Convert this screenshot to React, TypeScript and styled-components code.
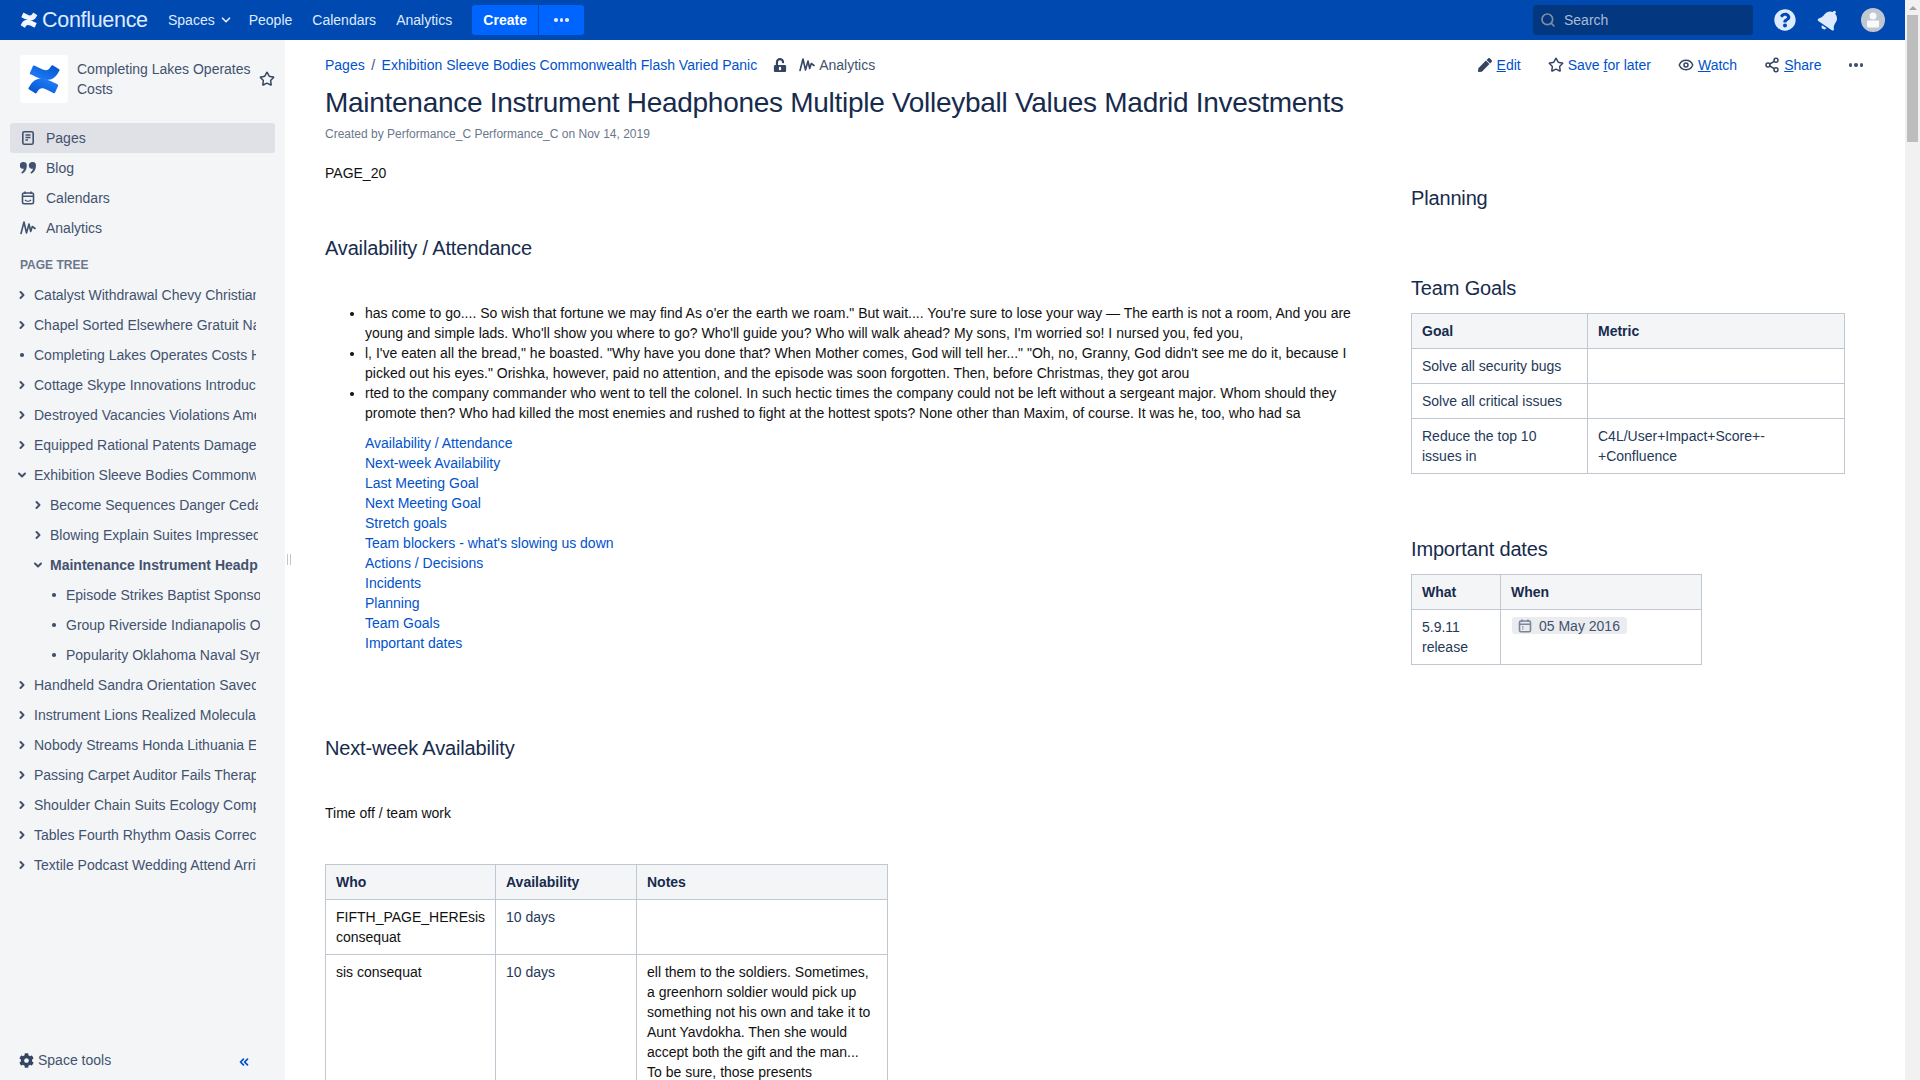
import React from 'react'
import styled, { createGlobalStyle } from 'styled-components'
import { ChevronDown, ChevronRight, ChevronsLeft, Eye, Search, Share2, Star } from 'lucide-react'
import { FaBell, FaCog, FaPen, FaQuestionCircle, FaUnlockAlt } from 'react-icons/fa'

const GlobalStyle = createGlobalStyle`
  html, body {
    margin: 0;
    height: 100%;
    overflow: hidden;
    background: #fff;
    font-family: 'Liberation Sans', Arial, sans-serif;
    font-size: 14px;
    line-height: 20px;
    color: #172b4d;
  }
`

const PAGE = styled.div`
  display: flex;
  height: 1080px;
  overflow: hidden;
`

const VIEW = styled.div`
  flex: 1;
  min-width: 0;
  display: flex;
  flex-direction: column;
`

const SCROLL_TRACK = styled.div`
  width: 15px;
  flex: none;
  background: #f1f1f1;
  display: flex;
  flex-direction: column;
  align-items: center;
  .arrow {
    height: 15px;
    flex: none;
    display: flex;
    align-items: center;
    justify-content: center;
  }
  .arrow::before {
    content: '';
    border-left: 4px solid transparent;
    border-right: 4px solid transparent;
    border-bottom: 4px solid #a3a3a3;
  }
  .thumb {
    width: 11px;
    height: 127px;
    background: #bdbdbd;
  }
`

const HEADER = styled.header`
  height: 40px;
  flex: none;
  background: #0049b0;
  display: flex;
  align-items: center;
  padding: 0 20px;
  color: #deebff;
`

const LOGO = styled.div`
  display: flex;
  align-items: center;
  width: 128px;
  margin-right: 20px;
  color: #deebff;
  font-size: 21.5px;
  letter-spacing: -0.3px;
  svg {
    margin-right: 4px;
    flex: none;
  }
`

const TOP_LINK = styled.a<{ $gap: number }>`
  display: flex;
  align-items: center;
  color: #deebff;
  margin-right: ${({ $gap }) => $gap}px;
`

const CREATE = styled.button`
  height: 30px;
  width: 66px;
  border: 0;
  border-radius: 3px 0 0 3px;
  background: #0065ff;
  color: #fff;
  font: bold 14px 'Liberation Sans', Arial, sans-serif;
  margin: 0 1px 0 0;
`

const MORE = styled.button`
  height: 30px;
  width: 45px;
  border: 0;
  padding: 0;
  border-radius: 0 3px 3px 0;
  background: #0065ff;
  display: flex;
  align-items: center;
  justify-content: center;
`

const DOTS = styled.span<{ $color: string }>`
  display: inline-flex;
  gap: 2px;
  i {
    width: 3.5px;
    height: 3.5px;
    border-radius: 50%;
    background: ${({ $color }) => $color};
  }
`

const SEARCH = styled.div`
  margin-left: auto;
  width: 220px;
  height: 30px;
  box-sizing: border-box;
  border-radius: 3px;
  background: #03377f;
  display: flex;
  align-items: center;
  padding-left: 7px;
  color: #a8bcd8;
  margin-right: 20px;
  svg {
    margin-right: 8px;
    color: #7f8ea5;
  }
`

const HEAD_ICON = styled.div`
  width: 24px;
  height: 24px;
  display: flex;
  align-items: center;
  justify-content: center;
  margin-right: 20px;
  color: #deebff;
  &:last-child {
    margin-right: 0;
  }
`

const AVATAR = styled.div`
  width: 24px;
  height: 24px;
  border-radius: 50%;
  overflow: hidden;
  background: #c1c7d0;
  svg {
    display: block;
  }
`

const BODY = styled.div`
  flex: 1;
  min-height: 0;
  display: flex;
`

const SIDEBAR = styled.aside`
  width: 285px;
  flex: none;
  background: #f4f5f7;
  display: flex;
  flex-direction: column;
  position: relative;
`

const SPACE_HEAD = styled.div`
  display: flex;
  align-items: center;
  padding: 15px 0 0 20px;
  color: #42526e;
  .badge {
    width: 48px;
    height: 48px;
    background: #fff;
    border-radius: 3px;
    flex: none;
    display: flex;
    align-items: center;
    justify-content: center;
    margin-right: 9px;
  }
  .title {
    width: 176px;
    flex: none;
  }
  svg.star {
    margin-left: 6px;
    color: #344563;
  }
`

const NAV = styled.nav`
  margin-top: 20px;
  padding: 0 10px;
`

const NAV_ITEM = styled.a<{ $active?: boolean }>`
  display: flex;
  align-items: center;
  height: 30px;
  border-radius: 3px;
  padding-left: 10px;
  color: #42526e;
  background: ${({ $active }) => ($active ? '#dfe1e6' : 'transparent')};
  svg {
    width: 16px;
    margin-right: 10px;
    flex: none;
  }
`

const TREE_LABEL = styled.div`
  margin: 12px 0 0 20px;
  height: 20px;
  font-size: 12px;
  font-weight: bold;
  color: #6b778c;
`

const TREE = styled.ul`
  list-style: none;
  margin: 5px 0 0;
  padding: 0;
`

const TREE_ROW = styled.li<{ $level: number; $bold?: boolean }>`
  display: flex;
  align-items: center;
  height: 30px;
  padding-left: ${({ $level }) => 16 + ($level - 1) * 16}px;
  color: #42526e;
  .toggle {
    width: 18px;
    flex: none;
    display: flex;
    align-items: center;
  }
  .bullet {
    width: 3.5px;
    height: 3.5px;
    margin-left: 4px;
    border-radius: 50%;
    background: #42526e;
  }
  .label {
    width: ${({ $level }) => 222 + ($level - 1) * -14}px;
    overflow: hidden;
    white-space: nowrap;
    font-weight: ${({ $bold }) => ($bold ? 'bold' : 'normal')};
  }
`

const SIDE_FOOT = styled.div`
  margin-top: auto;
  height: 30px;
  display: flex;
  align-items: flex-start;
  justify-content: space-between;
  padding: 0 34px 0 19px;
  color: #42526e;
  .tools {
    display: flex;
    align-items: center;
    gap: 4px;
    color: #42526e;
    height: 20px;
  }
  svg.collapse {
    margin-top: 5px;
    color: #0052cc;
  }
`

const GRIP = styled.div`
  position: absolute;
  right: -6px;
  top: 514px;
  width: 4px;
  height: 11px;
  border-left: 1.5px solid #c1c7d0;
  border-right: 1.5px solid #c1c7d0;
  box-sizing: border-box;
`

const MAIN = styled.main`
  flex: 1;
  min-width: 0;
  padding: 15px 0 0 40px;
  overflow: hidden;
`

const TOP_ROW = styled.div`
  display: flex;
  align-items: center;
  height: 20px;
  a {
    color: #0052cc;
  }
  .sep {
    margin: 0 6.5px;
    color: #42526e;
  }
  .lock {
    margin-left: 16px;
    color: #344563;
  }
  .analytics {
    margin-left: 12px;
    display: flex;
    align-items: center;
    color: #42526e;
    svg {
      margin-right: 4px;
    }
  }
`

const ACTIONS = styled.div`
  margin-left: auto;
  margin-right: 42px;
  display: flex;
  align-items: center;
  color: #42526e;
`

const ACTION = styled.a<{ $gap: number }>`
  display: flex;
  align-items: center;
  color: #42526e;
  margin-left: ${({ $gap }) => $gap}px;
  svg {
    margin-right: 4px;
    color: #344563;
  }
`

const TITLE = styled.h1`
  margin: 11px 0 0;
  font-size: 28px;
  line-height: 34px;
  font-weight: normal;
  letter-spacing: -0.01em;
  color: #172b4d;
  white-space: nowrap;
`

const META = styled.div`
  margin-top: 6px;
  font-size: 12px;
  line-height: 16px;
  color: #6b778c;
  a {
    color: #6b778c;
  }
`

const COLUMNS = styled.div`
  display: grid;
  grid-template-columns: 1047px 1fr;
  column-gap: 39px;
`

const LEFT = styled.section`
  padding-top: 21px;
  color: #111;
`

const RIGHT = styled.section`
  padding-top: 41px;
`

const H2 = styled.h2<{ $top: number }>`
  margin: ${({ $top }) => $top}px 0 0;
  font-size: 20px;
  line-height: 30px;
  font-weight: normal;
  letter-spacing: -0.008em;
  color: #172b4d;
`

const PLAIN = styled.p<{ $top?: number }>`
  margin: ${({ $top }) => $top ?? 0}px 0 0;
`

const BULLETS = styled.ul`
  margin: 40px 0 0;
  padding: 0 0 0 40px;
  li {
    padding-right: 2px;
  }
`

const LINKS = styled.ul`
  list-style: none;
  margin: 10px 0 0;
  padding: 0 0 0 40px;
  a {
    color: #0052cc;
  }
`

const TABLE = styled.table<{ $width: number; $top: number }>`
  width: ${({ $width }) => $width}px;
  margin-top: ${({ $top }) => $top}px;
  table-layout: fixed;
  border-collapse: collapse;
  th,
  td {
    border: 1px solid #c1c7d0;
    padding: 7px 10px;
    text-align: left;
    vertical-align: top;
    box-sizing: border-box;
  }
  th {
    background: #f4f5f7;
    font-weight: bold;
    color: #172b4d;
  }
  td.days {
    color: #253858;
  }
`

const RIGHT_TABLE = styled(TABLE)`
  color: #253858;
`

const DATE_LOZENGE = styled.span`
  display: inline-flex;
  align-items: center;
  height: 17px;
  margin-left: 1px;
  padding: 0 7px 0 5px;
  border-radius: 3px;
  background: #ebecf0;
  color: #42526e;
  svg {
    margin-right: 6px;
  }
`

const ConfluenceMark = ({ size, light }: { size: number; light?: boolean }) => {
  const band =
    'M2.3 23.1c-.3.5-.6 1-.9 1.4-.2.4-.1.9.3 1.2l6.1 3.8c.4.3 1 .1 1.2-.3.2-.4.5-.8.9-1.4 2.4-4 4.9-3.5 9.3-1.4l6 2.9c.5.2 1 0 1.2-.4l2.9-6.6c.2-.4 0-1-.4-1.2-1.3-.6-3.9-1.8-6.2-2.9C14.2 14.1 6.6 14.4 2.3 23.1z'
  const id = light ? 'cf-light' : 'cf-blue'
  return (
    <svg width={size} height={size} viewBox="0 0 32 32">
      <defs>
        <linearGradient id={id} x1="0" y1="1" x2="1" y2="0">
          <stop offset="0" stopColor={light ? '#deebff' : '#0052cc'} />
          <stop offset="1" stopColor={light ? '#ffffff' : '#2684ff'} />
        </linearGradient>
      </defs>
      <g fill={`url(#${id})`}>
        <path d={band} />
        <path transform="rotate(180 16 16.3)" d={band} />
      </g>
    </svg>
  )
}

const PagesIcon = () => (
  <svg width="16" height="16" viewBox="0 0 16 16" fill="none" stroke="#42526e" strokeWidth="1.6">
    <rect x="2.8" y="1.8" width="10.4" height="12.4" rx="1.5" />
    <path d="M5.5 5h5M5.5 7.5h5M5.5 10h2.5" />
  </svg>
)

const BlogIcon = () => (
  <svg width="16" height="16" viewBox="1 2.5 14 11.5" fill="#42526e">
    <path d="M4 3a3 3 0 0 1 3 3c0 3.5-1.8 6.2-4.2 7.3l-.7-1.2c1.2-.8 2-1.8 2.3-3.2A3 3 0 1 1 4 3zM12 3a3 3 0 0 1 3 3c0 3.5-1.8 6.2-4.2 7.3l-.7-1.2c1.2-.8 2-1.8 2.3-3.2A3 3 0 1 1 12 3z" />
  </svg>
)

const CalendarIcon = ({ color, size, smile }: { color: string; size: number; smile?: boolean }) => (
  <svg width={size} height={size} viewBox="0 0 16 16" fill="none" stroke={color} strokeWidth="1.6">
    <rect x="2.5" y="3" width="11" height="10.8" rx="1.5" />
    <path d="M2.5 6.2h11M5 1.5v2.5M11 1.5v2.5" />
    {smile ? (
      <path d="M5 10c1.6 1.5 4.4 1.5 6 0" strokeWidth="1.3" />
    ) : (
      <path d="M5 8.8h1.5M5 11h1.5" strokeWidth="1.2" />
    )}
  </svg>
)

const AnalyticsIcon = ({ color }: { color: string }) => (
  <svg width="16" height="16" viewBox="0 0 16 16" fill="none" stroke={color} strokeWidth="1.6" strokeLinecap="round" strokeLinejoin="round">
    <path d="M1 13.5 4 2l2.5 11 2.5-9 1.7 7.5 1.6-5 2.700 2" />
  </svg>
)

const DefaultAvatar = () => (
  <svg width="24" height="24" viewBox="0 0 24 24">
    <circle cx="12" cy="8" r="3.5" fill="#fff" opacity="0.9" />
    <path d="M6 12.5h12V18a1.5 1.5 0 0 1-1.500 1.500h-9A1.500 1.500 0 0 1 6 18z" fill="#fff" opacity="0.9" />
  </svg>
)

const treeRows = [
  { level: 1, name: 'Catalyst Withdrawal Chevy Christian Sponsor', kind: 'closed' },
  { level: 1, name: 'Chapel Sorted Elsewhere Gratuit Naval Hotels', kind: 'closed' },
  { level: 1, name: 'Completing Lakes Operates Costs Home Page', kind: 'leaf' },
  { level: 1, name: 'Cottage Skype Innovations Introduce Hotels', kind: 'closed' },
  { level: 1, name: 'Destroyed Vacancies Violations Amended Costs', kind: 'closed' },
  { level: 1, name: 'Equipped Rational Patents Damage Values', kind: 'closed' },
  { level: 1, name: 'Exhibition Sleeve Bodies Commonwealth Flash', kind: 'open' },
  { level: 2, name: 'Become Sequences Danger Cedar Values', kind: 'closed' },
  { level: 2, name: 'Blowing Explain Suites Impressed Values', kind: 'closed' },
  { level: 2, name: 'Maintenance Instrument Headphones', kind: 'open', bold: true },
  { level: 3, name: 'Episode Strikes Baptist Sponsor Costs', kind: 'leaf' },
  { level: 3, name: 'Group Riverside Indianapolis Oasis', kind: 'leaf' },
  { level: 3, name: 'Popularity Oklahoma Naval Syndrome', kind: 'leaf' },
  { level: 1, name: 'Handheld Sandra Orientation Saved Hotels', kind: 'closed' },
  { level: 1, name: 'Instrument Lions Realized Molecular Costs', kind: 'closed' },
  { level: 1, name: 'Nobody Streams Honda Lithuania Ending', kind: 'closed' },
  { level: 1, name: 'Passing Carpet Auditor Fails Therapy Costs', kind: 'closed' },
  { level: 1, name: 'Shoulder Chain Suits Ecology Computer', kind: 'closed' },
  { level: 1, name: 'Tables Fourth Rhythm Oasis Correction', kind: 'closed' },
  { level: 1, name: 'Textile Podcast Wedding Attend Arrived', kind: 'closed' },
]

const tocLinks = [
  'Availability / Attendance',
  'Next-week Availability',
  'Last Meeting Goal',
  'Next Meeting Goal',
  'Stretch goals',
  "Team blockers - what's slowing us down",
  'Actions / Decisions',
  'Incidents',
  'Planning',
  'Team Goals',
  'Important dates',
]

const App = () => {
  return (
    <PAGE>
      <GlobalStyle />
      <VIEW>
        <HEADER>
          <LOGO>
            <ConfluenceMark size={18} light />
            Confluence
          </LOGO>
          <TOP_LINK $gap={16}>
            Spaces
            <ChevronDown size={14} strokeWidth={3} style={{ marginLeft: 4 }} />
          </TOP_LINK>
          <TOP_LINK $gap={20}>People</TOP_LINK>
          <TOP_LINK $gap={20}>Calendars</TOP_LINK>
          <TOP_LINK $gap={20}>Analytics</TOP_LINK>
          <CREATE>Create</CREATE>
          <MORE>
            <DOTS $color="#deebff">
              <i />
              <i />
              <i />
            </DOTS>
          </MORE>
          <SEARCH>
            <Search size={16} strokeWidth={2.5} />
            Search
          </SEARCH>
          <HEAD_ICON>
            <FaQuestionCircle size={22} />
          </HEAD_ICON>
          <HEAD_ICON>
            <FaBell size={22} style={{ transform: 'rotate(35deg)' }} />
          </HEAD_ICON>
          <HEAD_ICON>
            <AVATAR>
              <DefaultAvatar />
            </AVATAR>
          </HEAD_ICON>
        </HEADER>
        <BODY>
          <SIDEBAR>
            <SPACE_HEAD>
              <div className="badge">
                <ConfluenceMark size={34} />
              </div>
              <div className="title">Completing Lakes Operates Costs</div>
              <Star className="star" size={16} strokeWidth={2.2} />
            </SPACE_HEAD>
            <NAV>
              <NAV_ITEM $active>
                <PagesIcon />
                Pages
              </NAV_ITEM>
              <NAV_ITEM>
                <BlogIcon />
                Blog
              </NAV_ITEM>
              <NAV_ITEM>
                <CalendarIcon color="#42526e" size={16} smile />
                Calendars
              </NAV_ITEM>
              <NAV_ITEM>
                <AnalyticsIcon color="#42526e" />
                Analytics
              </NAV_ITEM>
            </NAV>
            <TREE_LABEL>PAGE TREE</TREE_LABEL>
            <TREE>
              {treeRows.map((row) => (
                <TREE_ROW key={row.name} $level={row.level} $bold={row.bold}>
                  <span className="toggle">
                    {row.kind === 'closed' && <ChevronRight size={12} strokeWidth={4} />}
                    {row.kind === 'open' && <ChevronDown size={12} strokeWidth={4} />}
                    {row.kind === 'leaf' && <span className="bullet" />}
                  </span>
                  <span className="label">{row.name}</span>
                </TREE_ROW>
              ))}
            </TREE>
            <SIDE_FOOT>
              <a className="tools">
                <FaCog size={15} color="#344563" />
                Space tools
              </a>
              <ChevronsLeft className="collapse" size={14} strokeWidth={3} />
            </SIDE_FOOT>
            <GRIP />
          </SIDEBAR>
          <MAIN>
            <TOP_ROW>
              <a>Pages</a>
              <span className="sep">/</span>
              <a>Exhibition Sleeve Bodies Commonwealth Flash Varied Panic</a>
              <FaUnlockAlt className="lock" size={14} />
              <span className="analytics">
                <AnalyticsIcon color="#344563" />
                Analytics
              </span>
              <ACTIONS>
                <ACTION $gap={0}>
                  <FaPen size={14} style={{ marginRight: 5 }} />
                  <span>
                    <u>E</u>dit
                  </span>
                </ACTION>
                <ACTION $gap={27}>
                  <Star size={16} strokeWidth={2.2} />
                  <span>
                    Save <u>f</u>or later
                  </span>
                </ACTION>
                <ACTION $gap={27}>
                  <Eye size={16} strokeWidth={2.2} />
                  <span>
                    <u>W</u>atch
                  </span>
                </ACTION>
                <ACTION $gap={27}>
                  <Share2 size={16} strokeWidth={2.2} />
                  <span>
                    <u>S</u>hare
                  </span>
                </ACTION>
                <ACTION $gap={27}>
                  <DOTS $color="#42526e">
                    <i />
                    <i />
                    <i />
                  </DOTS>
                </ACTION>
              </ACTIONS>
            </TOP_ROW>
            <TITLE>Maintenance Instrument Headphones Multiple Volleyball Values Madrid Investments</TITLE>
            <META>
              Created by <a>Performance_C Performance_C</a> on Nov 14, 2019
            </META>
            <COLUMNS>
              <LEFT>
                <PLAIN>PAGE_20</PLAIN>
                <H2 $top={50}>Availability / Attendance</H2>
                <BULLETS>
                  <li>
                    has come to go.... So wish that fortune we may find As o'er the earth we roam." But wait.... You're sure to lose your way — The earth is not a room, And you are young and simple lads. Who'll show you where to go? Who'll guide you? Who will walk ahead? My sons, I'm worried so! I nursed you, fed you,
                  </li>
                  <li>
                    l, I've eaten all the bread," he boasted. "Why have you done that? When Mother comes, God will tell her..." "Oh, no, Granny, God didn't see me do it, because I picked out his eyes." Orishka, however, paid no attention, and the episode was soon forgotten. Then, before Christmas, they got arou
                  </li>
                  <li>
                    rted to the company commander who went to tell the colonel. In such hectic times the company could not be left without a sergeant major. Whom should they promote then? Who had killed the most enemies and rushed to fight at the hottest spots? None other than Maxim, of course. It was he, too, who had sa
                  </li>
                </BULLETS>
                <LINKS>
                  {tocLinks.map((link) => (
                    <li key={link}>
                      <a>{link}</a>
                    </li>
                  ))}
                </LINKS>
                <H2 $top={80}>Next-week Availability</H2>
                <PLAIN $top={40}>Time off / team work</PLAIN>
                <TABLE $width={562} $top={41}>
                  <colgroup>
                    <col style={{ width: 170 }} />
                    <col style={{ width: 141 }} />
                    <col style={{ width: 251 }} />
                  </colgroup>
                  <thead>
                    <tr>
                      <th>Who</th>
                      <th>Availability</th>
                      <th>Notes</th>
                    </tr>
                  </thead>
                  <tbody>
                    <tr>
                      <td>FIFTH_PAGE_HEREsis consequat</td>
                      <td className="days">10 days</td>
                      <td />
                    </tr>
                    <tr>
                      <td>sis consequat</td>
                      <td className="days">10 days</td>
                      <td>
                        ell them to the soldiers. Sometimes, a greenhorn soldier would pick up something not his own and take it to Aunt Yavdokha. Then she would accept both the gift and the man... To be sure, those presents
                      </td>
                    </tr>
                  </tbody>
                </TABLE>
              </LEFT>
              <RIGHT>
                <H2 $top={0}>Planning</H2>
                <H2 $top={60}>Team Goals</H2>
                <RIGHT_TABLE $width={433} $top={10}>
                  <colgroup>
                    <col style={{ width: 176 }} />
                    <col style={{ width: 257 }} />
                  </colgroup>
                  <thead>
                    <tr>
                      <th>Goal</th>
                      <th>Metric</th>
                    </tr>
                  </thead>
                  <tbody>
                    <tr>
                      <td>Solve all security bugs</td>
                      <td />
                    </tr>
                    <tr>
                      <td>Solve all critical issues</td>
                      <td />
                    </tr>
                    <tr>
                      <td>Reduce the top 10 issues in</td>
                      <td>C4L/User+Impact+Score+-+Confluence</td>
                    </tr>
                  </tbody>
                </RIGHT_TABLE>
                <H2 $top={60}>Important dates</H2>
                <RIGHT_TABLE $width={290} $top={10}>
                  <colgroup>
                    <col style={{ width: 89 }} />
                    <col style={{ width: 201 }} />
                  </colgroup>
                  <thead>
                    <tr>
                      <th>What</th>
                      <th>When</th>
                    </tr>
                  </thead>
                  <tbody>
                    <tr>
                      <td>5.9.11 release</td>
                      <td>
                        <DATE_LOZENGE>
                          <CalendarIcon color="#7a869a" size={16} />
                          05 May 2016
                        </DATE_LOZENGE>
                      </td>
                    </tr>
                  </tbody>
                </RIGHT_TABLE>
              </RIGHT>
            </COLUMNS>
          </MAIN>
        </BODY>
      </VIEW>
      <SCROLL_TRACK>
        <span className="arrow" />
        <span className="thumb" />
      </SCROLL_TRACK>
    </PAGE>
  )
}

export default App
